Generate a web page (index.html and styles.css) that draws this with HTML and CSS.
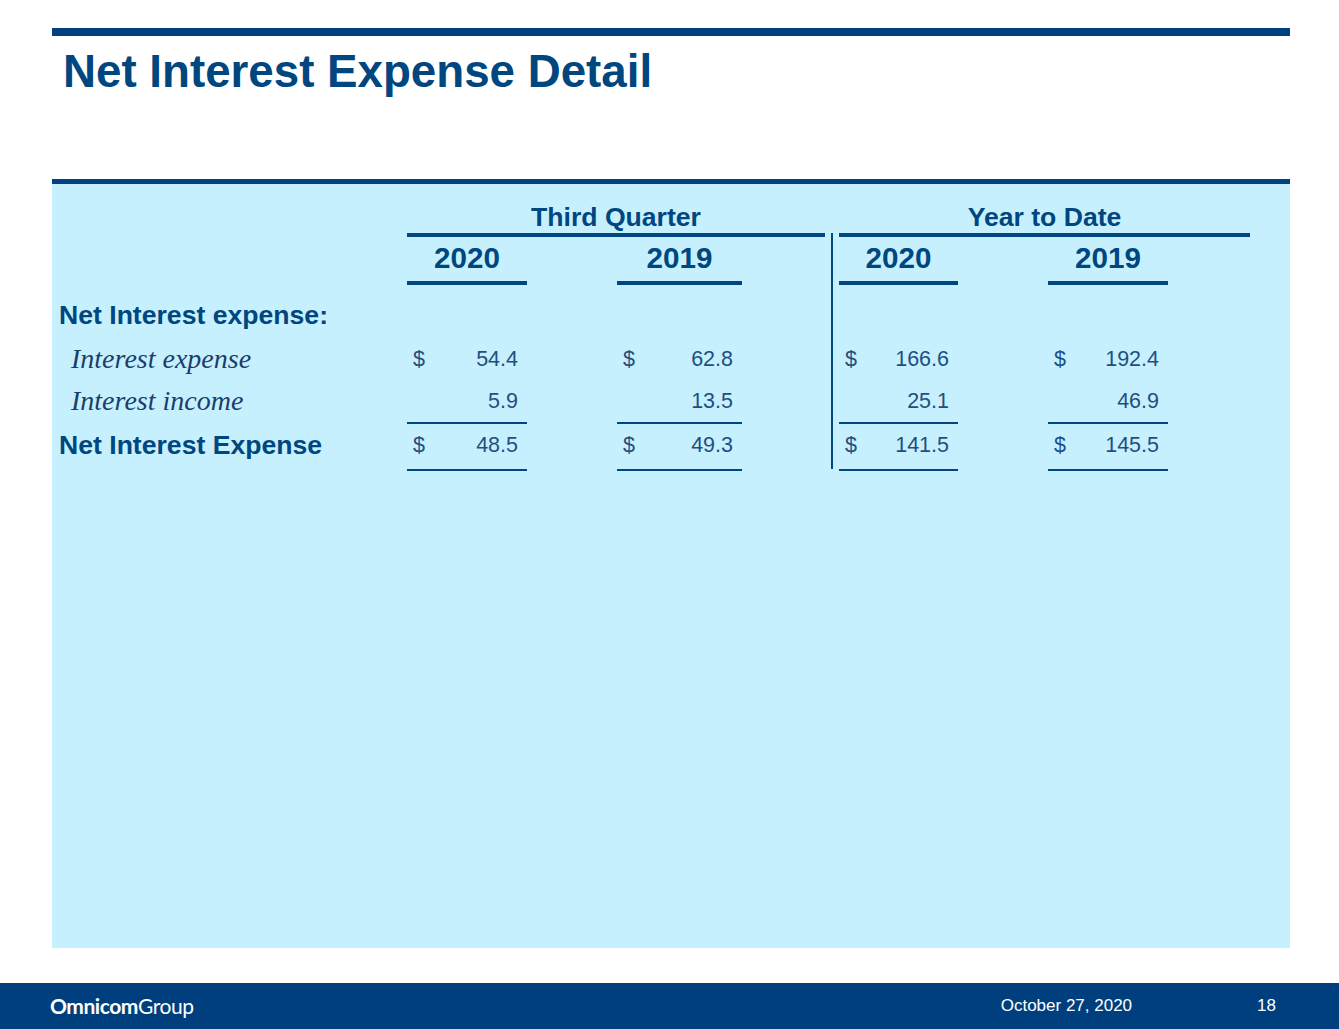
FILE: index.html
```html
<!DOCTYPE html>
<html lang="en">
<head>
<meta charset="utf-8">
<title>Net Interest Expense Detail</title>
<link rel="stylesheet" href="styles.css">
</head>
<body>
<div class="slide">
  <div class="topbar"></div>
  <h1 class="title">Net Interest Expense Detail</h1>
  <section class="panel">
    <div class="grid">
      <div class="group group-q">Third Quarter</div>
      <div class="group group-y">Year to Date</div>

      <div class="year c1 r2">2020</div>
      <div class="year c2 r2">2019</div>
      <div class="year c3 r2">2020</div>
      <div class="year c4 r2">2019</div>

      <div class="sep"></div>

      <div class="label head r3">Net Interest expense:</div>

      <div class="label sub r4">Interest expense</div>
      <div class="num c1 r4"><span>$</span><span>54.4</span></div>
      <div class="num c2 r4"><span>$</span><span>62.8</span></div>
      <div class="num c3 r4"><span>$</span><span>166.6</span></div>
      <div class="num c4 r4"><span>$</span><span>192.4</span></div>

      <div class="label sub r5">Interest income</div>
      <div class="num c1 r5 under"><span></span><span>5.9</span></div>
      <div class="num c2 r5 under"><span></span><span>13.5</span></div>
      <div class="num c3 r5 under"><span></span><span>25.1</span></div>
      <div class="num c4 r5 under"><span></span><span>46.9</span></div>

      <div class="label head r6">Net Interest Expense</div>
      <div class="num c1 r6 total"><span>$</span><span>48.5</span></div>
      <div class="num c2 r6 total"><span>$</span><span>49.3</span></div>
      <div class="num c3 r6 total"><span>$</span><span>141.5</span></div>
      <div class="num c4 r6 total"><span>$</span><span>145.5</span></div>
    </div>
  </section>
  <footer class="footer">
    <div class="logo"><b>Omnicom</b>Group</div>
    <div class="date">October 27, 2020</div>
    <div class="page">18</div>
  </footer>
</div>
</body>
</html>
```

FILE: styles.css
```css
html, body {
  margin: 0;
  padding: 0;
  background: #ffffff;
}

.slide {
  width: 1339px;
  height: 1029px;
  padding-top: 28px;
  box-sizing: border-box;
  font-family: "Liberation Sans", Arial, sans-serif;
  overflow: hidden;
}

.topbar {
  height: 8px;
  margin: 0 49px 0 52px;
  background: #00427f;
}

.title {
  margin: 8px 0 0 63px;
  font-size: 45.7px;
  line-height: 56px;
  font-weight: bold;
  color: #00467f;
}

.panel {
  margin: 79px 49px 0 52px;
  height: 769px;
  box-sizing: border-box;
  border-top: 5px solid #00427f;
  background: #c6f0fd;
}

.grid {
  display: grid;
  grid-template-columns: 355px 120px 90px 125px 97px 119px 90px 120px 82px;
  grid-template-rows: 53px 48px 53px 42px 44px 47px;
}

.group {
  grid-row: 1;
  box-sizing: border-box;
  padding-top: 17px;
  line-height: 32px;
  border-bottom: 4px solid #00467f;
  text-align: center;
  font-size: 26.6px;
  font-weight: bold;
  color: #00467f;
}

.group-q {
  grid-column: 2 / 6;
  margin-right: 14px;
}

.group-y {
  grid-column: 6 / 10;
}

.c1 { grid-column: 2; }
.c2 { grid-column: 4; }
.c3 { grid-column: 6; }
.c4 { grid-column: 8; }
.r2 { grid-row: 2; }
.r3 { grid-row: 3; }
.r4 { grid-row: 4; }
.r5 { grid-row: 5; }
.r6 { grid-row: 6; }

.year {
  box-sizing: border-box;
  padding-top: 4px;
  padding-bottom: 6px;
  line-height: 34px;
  border-bottom: 4px solid #00467f;
  text-align: center;
  font-size: 29.6px;
  font-weight: bold;
  color: #00467f;
}

.sep {
  grid-column: 5;
  grid-row: 2 / 7;
  width: 2px;
  margin-left: 89px;
  margin-top: -4px;
  margin-bottom: 2px;
  background: #00467f;
}

.label {
  grid-column: 1;
  white-space: nowrap;
}

.label.head {
  padding-left: 7px;
  font-size: 26.6px;
  font-weight: bold;
  color: #00467f;
  line-height: 42px;
}

.label.r3 {
  padding-top: 9px;
}

.label.sub {
  padding-left: 19px;
  font-family: "Liberation Serif", "Times New Roman", serif;
  font-style: italic;
  font-size: 28px;
  line-height: 42px;
  color: #1c3d6c;
}

.num {
  display: flex;
  justify-content: space-between;
  padding: 0 9px 0 6px;
  font-size: 21.5px;
  line-height: 42px;
  color: #1f4f7f;
}

.num.under {
  box-sizing: border-box;
  border-bottom: 2px solid #00467f;
}

.num.total {
  box-sizing: border-box;
  padding-bottom: 3px;
  border-bottom: 2px solid #00467f;
}

.footer {
  margin-top: 35px;
  height: 46px;
  background: #003f7e;
  display: flex;
  align-items: center;
  color: #ffffff;
}

.logo {
  margin-left: 50px;
  font-family: Lato, "Open Sans", sans-serif;
  font-size: 21px;
  letter-spacing: -0.45px;
  padding-bottom: 1px;
}

.logo b {
  font-weight: bold;
}

.date {
  margin-left: auto;
  font-size: 17px;
}

.page {
  margin-left: 125px;
  margin-right: 63px;
  font-size: 17px;
}
```
